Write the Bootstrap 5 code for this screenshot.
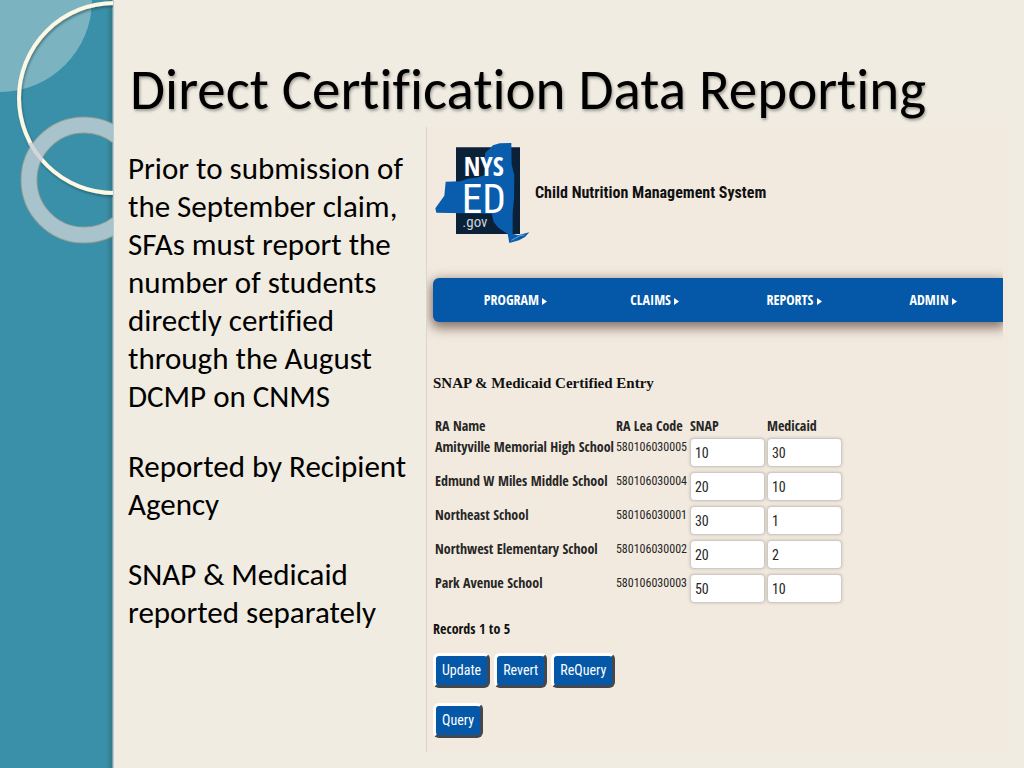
<!DOCTYPE html>
<html lang="en">
<head>
<meta charset="utf-8">
<meta name="viewport" content="width=device-width, initial-scale=1">
<title>Direct Certification Data Reporting</title>
<link href="https://cdn.jsdelivr.net/npm/bootstrap@5.3.0/dist/css/bootstrap.min.css" rel="stylesheet">
<style>
  body { background: #f0ece1; color: #000; font-family: Carlito, Lato, sans-serif; font-variant-ligatures: none; }
  .side-band { width: 114px; background: linear-gradient(to left, #b9cdd0 0, #b9cdd0 1px, #34798a 2px, #3990a8 8px); }
  .slide-title { font-size: 57px; line-height: 60px; padding: 60px 0 7px 16px; text-shadow: 1px 2px 3px rgba(0,0,0,.35); }
  .notes { width: 312px; padding: 22px 14px 0 14px; font-size: 31px; line-height: 38px; }
  .notes p { margin-bottom: 32px; }
  .cnms { background: #f3eadf; border-left: 1px solid #d6d6ca; margin-right: 16px; padding: 15px 5px 13px 6px; font-family: "Roboto Condensed", "Liberation Sans", sans-serif; color: #262626; }
  .system-name { font-size: 16px; line-height: 22px; color: #111; }
  .menu-clip { overflow: hidden; margin: 18px 0 0 -6px; padding: 16px 0 24px 6px; }
  .menu-bar { background: #0558a8; border-radius: 6px 0 0 6px; height: 44px; padding-left: 13px; box-shadow: 0 4px 12px 2px rgba(60,35,25,.6); }
  .menu-bar a { color: #fff; font-family: "Open Sans Condensed", "Roboto Condensed", sans-serif; font-size: 14px; line-height: 20px; font-weight: 700; text-decoration: none; }
  .entry-title { font-family: "Liberation Serif", serif; font-weight: 700; font-size: 15px; line-height: 24px; color: #111; margin: 25px 0 19px; }
  .entry-table { font-family: "Open Sans Condensed", "Roboto Condensed", sans-serif; font-size: 14px; line-height: 20px; margin-left: 2px; }
  .entry-table th, .entry-table td { padding: 0 2px 0 0; vertical-align: top; white-space: nowrap; }
  .entry-table thead th { line-height: 23px; }
  .entry-table .col-ra { width: 180px; }
  .entry-table .col-lea { width: 74px; }
  .entry-table .code { font-family: "Roboto Condensed", sans-serif; font-size: 12px; }
  .entry-table input { display: block; width: 75px; height: 29px; margin: 1px 0 4px; padding: 0 4px; font-family: "Roboto Condensed", sans-serif; font-size: 14px; line-height: 20px; color: #262626; border: 1px solid #cfcbc4; border-radius: 4px; box-shadow: 0 0 3px rgba(120,120,110,.4); }
  .records { font-family: "Open Sans Condensed", "Roboto Condensed", sans-serif; font-size: 14px; line-height: 20px; color: #111; margin: 12px 0 14px; font-weight: 700; }
  .push { font-size: 14px; line-height: 19px; color: #fff; background: #0558a8; padding: 5px 6px; border: 3px solid; border-color: #fff #44474d #44474d #fff; border-radius: 6px; }
  .push-row { margin: 0 0 15px; }
</style>
</head>
<body>
<div class="d-flex min-vh-100">
  <aside class="side-band flex-shrink-0">
    <svg class="d-block" width="113" height="250" viewBox="0 0 113 250" aria-hidden="true">
      <defs><filter id="soft" x="-10%" y="-10%" width="120%" height="120%"><feDropShadow dx="1" dy="2" stdDeviation="1" flood-color="#173d48" flood-opacity=".5"/></filter></defs>
      <circle cx="0" cy="0" r="92" fill="#7bb3c0"/>
      <circle cx="114" cy="98" r="95" fill="none" stroke="#fdf8e3" stroke-width="4" filter="url(#soft)"/>
      <circle cx="84" cy="180" r="55" fill="none" stroke="#8f9c93" stroke-width="17"/>
      <circle cx="84" cy="180" r="55" fill="none" stroke="#a9c3cc" stroke-width="15"/>
      <path d="M30 143Q35 152 42 160" fill="none" stroke="#d6d6da" stroke-width="4"/>
    </svg>
  </aside>
  <main class="flex-grow-1 d-flex flex-column">
    <h1 class="slide-title fw-normal m-0">Direct Certification Data Reporting</h1>
    <div class="d-flex flex-grow-1 pb-3">
      <section class="notes flex-shrink-0">
        <p>Prior to submission of the September claim, SFAs must report the number of students directly certified through the August DCMP on CNMS</p>
        <p>Reported by Recipient Agency</p>
        <p class="mb-0">SNAP &amp; Medicaid reported separately</p>
      </section>
      <section class="cnms flex-grow-1">
        <header class="d-flex align-items-center">
          <svg width="98" height="102" viewBox="24 50 294 306" role="img" aria-label="NYSED.gov">
            <path d="M93 66H285V326H93Z" fill="#0b2138"/>
            <path d="M62 169L105 168 128 160 160 156 180 148 188 130 178 105 181 82 204 60 224 54 259 53 260 118 268 150 267 220 263 264 263 325 279 330 313 321 300 335 282 345 253 353 248 326 220 307 206 290 200 265 34 262 31 249 58 211Z" fill="#0a5cad"/>
            <path d="M259 345L285 331 298 329" fill="none" stroke="#a7c6df" stroke-width="2"/>
            <g fill="#fff" font-family="'Open Sans Condensed', 'Roboto Condensed', sans-serif">
              <text x="116" y="152" font-size="80" font-weight="700">NYS</text>
              <text x="110" y="264" font-size="124" font-family="'Roboto Condensed', sans-serif">ED</text>
              <text x="112" y="305" font-size="45" fill="#c9d4df" font-family="'Roboto Condensed', sans-serif">.gov</text>
            </g>
          </svg>
          <div class="system-name fw-bold ms-1">Child Nutrition Management System</div>
        </header>
        <div class="menu-clip">
          <nav class="menu-bar d-flex align-items-center" aria-label="Main">
            <a class="col text-center" href="#">PROGRAM <svg width="5" height="8" viewBox="0 0 5 8" aria-hidden="true"><path d="M0 1L5 4.500 0 8Z" fill="#fff"/></svg></a>
            <a class="col text-center" href="#">CLAIMS <svg width="5" height="8" viewBox="0 0 5 8" aria-hidden="true"><path d="M0 1L5 4.500 0 8Z" fill="#fff"/></svg></a>
            <a class="col text-center" href="#">REPORTS <svg width="5" height="8" viewBox="0 0 5 8" aria-hidden="true"><path d="M0 1L5 4.500 0 8Z" fill="#fff"/></svg></a>
            <a class="col text-center" href="#">ADMIN <svg width="5" height="8" viewBox="0 0 5 8" aria-hidden="true"><path d="M0 1L5 4.500 0 8Z" fill="#fff"/></svg></a>
          </nav>
        </div>
        <h2 class="entry-title">SNAP &amp; Medicaid Certified Entry</h2>
        <form>
          <table class="entry-table">
            <thead><tr><th scope="col" class="col-ra">RA Name</th><th scope="col" class="col-lea">RA Lea Code</th><th scope="col">SNAP</th><th scope="col">Medicaid</th></tr></thead>
            <tbody>
              <tr><th scope="row">Amityville Memorial High School</th><td class="code">580106030005</td><td><input type="text" value="10" aria-label="SNAP, Amityville Memorial High School"></td><td><input type="text" value="30" aria-label="Medicaid, Amityville Memorial High School"></td></tr>
              <tr><th scope="row">Edmund W Miles Middle School</th><td class="code">580106030004</td><td><input type="text" value="20" aria-label="SNAP, Edmund W Miles Middle School"></td><td><input type="text" value="10" aria-label="Medicaid, Edmund W Miles Middle School"></td></tr>
              <tr><th scope="row">Northeast School</th><td class="code">580106030001</td><td><input type="text" value="30" aria-label="SNAP, Northeast School"></td><td><input type="text" value="1" aria-label="Medicaid, Northeast School"></td></tr>
              <tr><th scope="row">Northwest Elementary School</th><td class="code">580106030002</td><td><input type="text" value="20" aria-label="SNAP, Northwest Elementary School"></td><td><input type="text" value="2" aria-label="Medicaid, Northwest Elementary School"></td></tr>
              <tr><th scope="row">Park Avenue School</th><td class="code">580106030003</td><td><input type="text" value="50" aria-label="SNAP, Park Avenue School"></td><td><input type="text" value="10" aria-label="Medicaid, Park Avenue School"></td></tr>
            </tbody>
          </table>
          <p class="records">Records 1 to 5</p>
          <div class="push-row d-flex gap-1">
            <button type="button" class="push">Update</button>
            <button type="button" class="push">Revert</button>
            <button type="button" class="push">ReQuery</button>
          </div>
          <button type="button" class="push">Query</button>
        </form>
      </section>
    </div>
  </main>
</div>
<script src="https://cdn.jsdelivr.net/npm/bootstrap@5.3.0/dist/js/bootstrap.bundle.min.js"></script>
</body>
</html>
